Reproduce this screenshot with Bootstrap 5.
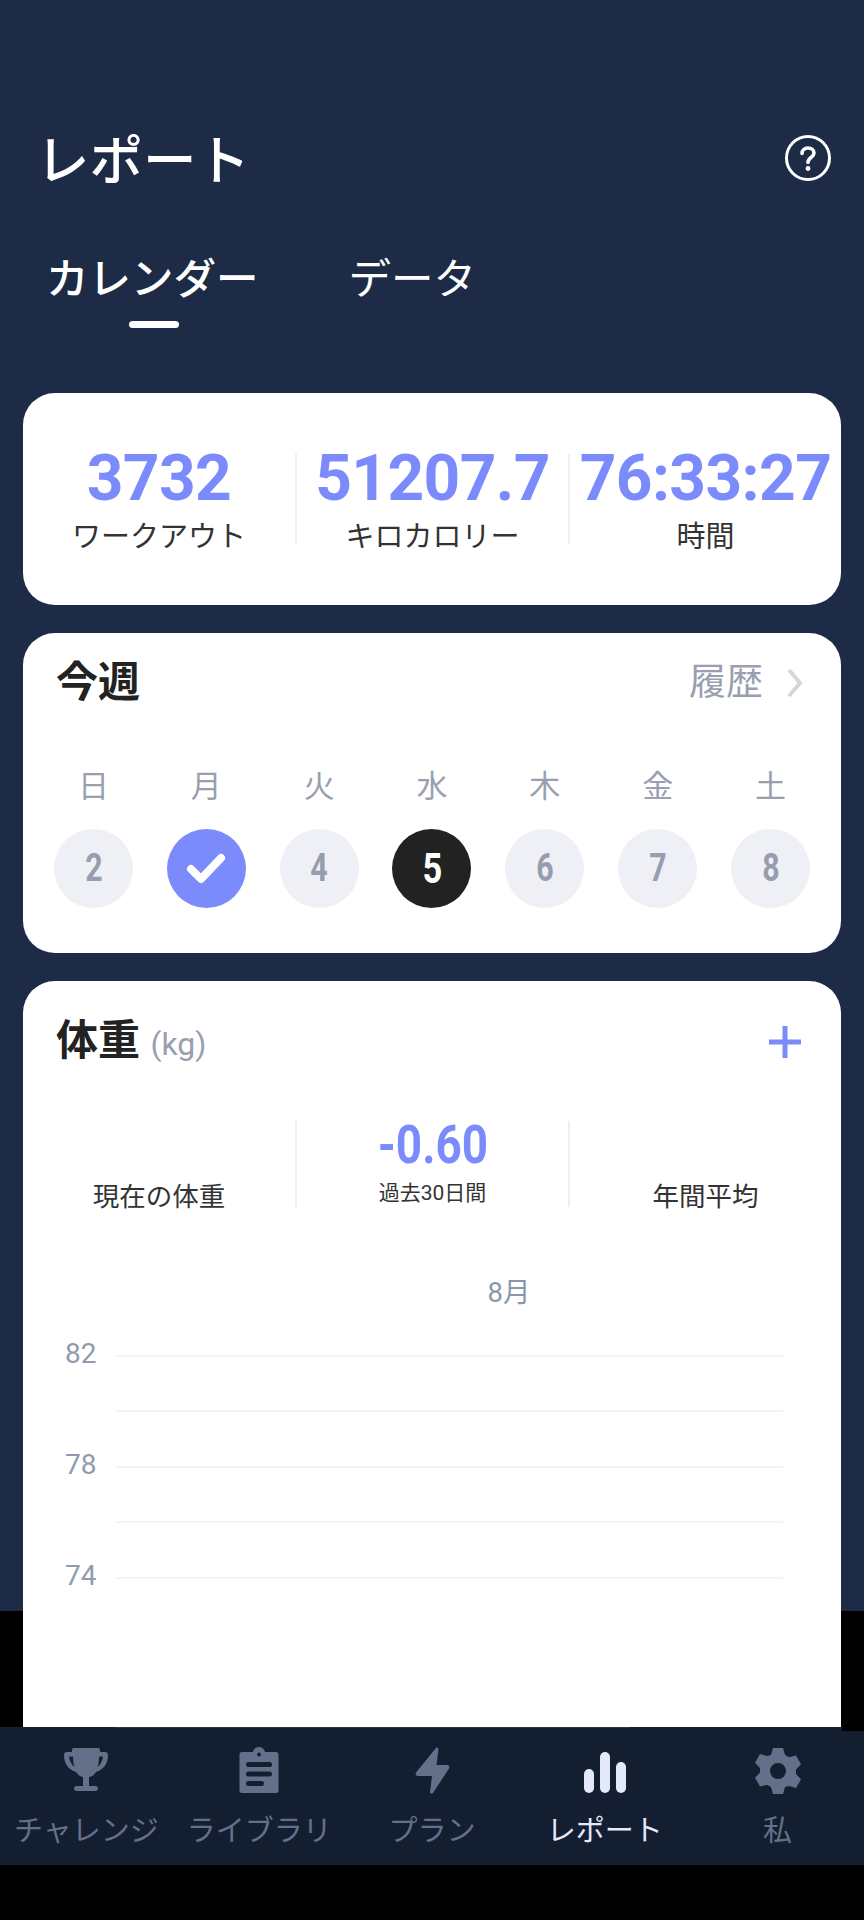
<!DOCTYPE html>
<html lang="ja">
<head>
    <meta charset="UTF-8">
    <meta name="viewport" content="width=device-width, initial-scale=1.0">
    <title>レポート</title>
    <link href="https://cdn.jsdelivr.net/npm/bootstrap@5.3.3/dist/css/bootstrap.min.css" rel="stylesheet">
    <style>
        html, body { background: #000; }
        body {
            width: 864px;
            height: 1920px;
            overflow: hidden;
            font-family: Roboto, "Noto Sans CJK JP", sans-serif;
            color: #222;
        }
        .report-screen {
            height: 1611px;
            background: #1d2b46;
            padding: 0 23px;
        }
        .report-head { height: 249px; padding: 128px 10px 0 13px; }
        .report-title { font-size: 53.500px; font-weight: 500; line-height: 68px; color: #fff; margin: 0; }
        .help-icon { width: 46px; height: 46px; margin-top: 7px; }
        .report-tabs { height: 144px; padding-left: 23px; gap: 90px; }
        .report-tab { font-size: 42.500px; line-height: 62px; color: #fff; position: relative; }
        .report-tab.is-active { font-weight: 500; }
        .report-tab.is-active::after {
            content: "";
            position: absolute;
            left: 83px;
            top: 72px;
            width: 50px;
            height: 7px;
            border-radius: 4px;
            background: #fff;
        }
        .panel { background: #fff; border-radius: 32px; margin-bottom: 28px; }
        .panel-total { height: 212px; padding-top: 51px; }
        .panel-week { height: 320px; padding: 20px 31px 0 33px; }
        .panel-weight { height: 746px; padding-top: 30px; margin-bottom: 0; border-radius: 32px 32px 0 0; }
        .stat-cell { width: 273px; text-align: center; flex: none; }
        .stat-cell:first-child { width: 272px; }
        .stat-cell + .stat-cell { border-left: 2px solid #eeeff2; }
        .stat-row-total .stat-cell { height: 90px; margin-top: 10px; }
        .stat-num { font-size: 64px; font-weight: 700; line-height: 62px; color: #7b8bfb; letter-spacing: -.6px; margin-top: -6px; white-space: nowrap; }
        .stat-label { font-size: 29px; line-height: 40px; color: #333; margin-top: 7px; }
        .panel-head-title { font-size: 42px; font-weight: 700; line-height: 60px; color: #222; }
        .history-wrap { gap: 23px; margin-right: 6px; }
        .history-link { font-size: 37px; line-height: 60px; color: #9a9fb0; }
        .day-row { margin-top: 52px; justify-content: space-between; }
        .day-col { width: 79px; margin-left: -2px; text-align: center; flex: none; }
        .day-name { font-size: 31px; line-height: 44px; color: #999fb0; }
        .day-dot {
            width: 79px;
            height: 79px;
            margin-top: 20px;
            border-radius: 50%;
            background: #eff0f5;
            color: #979daf;
            font-size: 38px;
            font-weight: 700;
        }
        .day-dot.is-done { background: #7b8bfb; }
        .day-dot.is-today { background: #222; color: #fff; font-size: 43px; }
        .narrow-digit { display: inline-block; transform: scaleX(.8); }
        .weight-head { padding: 0 40px 0 33px; }
        .weight-unit { font-size: 32px; font-weight: 400; color: #9a9fb0; }
        .plus-icon { width: 32px; height: 32px; margin-top: 15px; }
        .stat-row-weight { margin-top: 47px; }
        .stat-row-weight .stat-cell { height: 86px; }
        .stat-num-narrow {
            display: inline-block;
            transform: scaleX(.85);
            font-size: 54px;
            line-height: 48px;
            font-weight: 700;
            color: #7b8bfb;
        }
        .stat-sub { font-size: 21px; line-height: 30px; color: #333; margin-top: 8px; }
        .stat-label-low { font-size: 26.500px; line-height: 40px; color: #333; padding-top: 56px; }
        .month-label { font-size: 27.500px; line-height: 38px; color: #8a97a8; text-align: center; margin-top: 67px; padding-left: 154px; }
        .chart-area { margin-top: 16px; padding: 0 58px 0 42px; }
        .chart-row { height: 55.5px; }
        .chart-num { width: 51px; font-size: 28px; line-height: 28px; padding-bottom: 4px; height: 32px; color: #8f9bad; }
        .chart-line { flex: 1; height: 2px; background: #f3f4f6; }
        .tab-bar {
            position: relative;
            height: 138px;
            margin-top: 116px;
            background: #131e31;
        }
        /* seam where the chart sheet is cut off by the bar */
        .tab-bar::before { content: ""; position: absolute; left: 115px; top: 0; width: 515px; height: 1px; background: #2c3547; }
        .tab-bar::after { content: ""; position: absolute; right: 0; top: 0; width: 22px; height: 4px; background: #000; }
        .tab-item { width: 172.8px; text-align: center; flex: none; padding-top: 19px; color: #64708a; }
        .tab-item.is-active { color: #e4e8fb; }
        .tab-item svg { width: 50px; height: 50px; display: block; margin: 0 auto; }
        .tab-label { font-size: 29px; line-height: 40px; margin-top: 15px; white-space: nowrap; }
    </style>
</head>
<body>
<div class="report-screen">
    <div class="report-head d-flex justify-content-between align-items-start">
        <h1 class="report-title">レポート</h1>
        <svg class="help-icon" viewBox="0 0 46 46" fill="none">
            <circle cx="23" cy="23" r="21.500" stroke="#fff" stroke-width="3"/>
            <path d="M17 18.500c0-3.400 2.600-5.500 6-5.500s6 2.100 6 5c0 4.400-6 4.600-6 9.500" stroke="#fff" stroke-width="3.600" stroke-linecap="round"/>
            <circle cx="23" cy="33.500" r="2.400" fill="#fff"/>
        </svg>
    </div>
    <div class="report-tabs d-flex">
        <div class="report-tab is-active">カレンダー</div>
        <div class="report-tab">データ</div>
    </div>

    <!-- Totals -->
    <div class="panel panel-total">
        <div class="stat-row-total d-flex">
            <div class="stat-cell">
                <div class="stat-num">3732</div>
                <div class="stat-label">ワークアウト</div>
            </div>
            <div class="stat-cell">
                <div class="stat-num">51207.7</div>
                <div class="stat-label">キロカロリー</div>
            </div>
            <div class="stat-cell">
                <div class="stat-num">76:33:27</div>
                <div class="stat-label">時間</div>
            </div>
        </div>
    </div>

    <!-- This week -->
    <div class="panel panel-week">
        <div class="d-flex justify-content-between">
            <div class="panel-head-title">今週</div>
            <div class="history-wrap d-flex align-items-center">
                <span class="history-link">履歴</span>
                <svg width="18" height="30" viewBox="0 0 18 30" fill="none"><path d="M3 2l11 13L3 28" stroke="#d4d6dc" stroke-width="4"/></svg>
            </div>
        </div>
        <div class="day-row d-flex">
            <div class="day-col"><div class="day-name">日</div><div class="day-dot d-flex align-items-center justify-content-center"><span class="narrow-digit">2</span></div></div>
            <div class="day-col"><div class="day-name">月</div><div class="day-dot is-done d-flex align-items-center justify-content-center">
                <svg width="40" height="32" viewBox="0 0 40 32" fill="none"><path d="M5 16l10 10L35 5" stroke="#fff" stroke-width="8" stroke-linecap="round" stroke-linejoin="round"/></svg>
            </div></div>
            <div class="day-col"><div class="day-name">火</div><div class="day-dot d-flex align-items-center justify-content-center"><span class="narrow-digit">4</span></div></div>
            <div class="day-col"><div class="day-name">水</div><div class="day-dot is-today d-flex align-items-center justify-content-center"><span class="narrow-digit">5</span></div></div>
            <div class="day-col"><div class="day-name">木</div><div class="day-dot d-flex align-items-center justify-content-center"><span class="narrow-digit">6</span></div></div>
            <div class="day-col"><div class="day-name">金</div><div class="day-dot d-flex align-items-center justify-content-center"><span class="narrow-digit">7</span></div></div>
            <div class="day-col"><div class="day-name">土</div><div class="day-dot d-flex align-items-center justify-content-center"><span class="narrow-digit">8</span></div></div>
        </div>
    </div>

    <!-- Weight -->
    <div class="panel panel-weight">
        <div class="weight-head d-flex justify-content-between align-items-start">
            <div class="panel-head-title">体重 <span class="weight-unit">(kg)</span></div>
            <svg class="plus-icon" viewBox="0 0 32 32"><path d="M16 0v32M0 16h32" stroke="#7b8bfb" stroke-width="5"/></svg>
        </div>
        <div class="stat-row-weight d-flex">
            <div class="stat-cell"><div class="stat-label-low">現在の体重</div></div>
            <div class="stat-cell">
                <div class="stat-num-narrow">-0.60</div>
                <div class="stat-sub">過去30日間</div>
            </div>
            <div class="stat-cell"><div class="stat-label-low">年間平均</div></div>
        </div>
        <div class="month-label">8月</div>
        <div class="chart-area">
            <div class="chart-row d-flex align-items-center"><span class="chart-num">82</span><span class="chart-line"></span></div>
            <div class="chart-row d-flex align-items-center"><span class="chart-num"></span><span class="chart-line"></span></div>
            <div class="chart-row d-flex align-items-center"><span class="chart-num">78</span><span class="chart-line"></span></div>
            <div class="chart-row d-flex align-items-center"><span class="chart-num"></span><span class="chart-line"></span></div>
            <div class="chart-row d-flex align-items-center"><span class="chart-num">74</span><span class="chart-line"></span></div>
        </div>
    </div>
</div>

<!-- Bottom tabs -->
<nav class="tab-bar d-flex">
    <div class="tab-item">
        <svg viewBox="0 0 50 50" fill="currentColor"><path fill-rule="evenodd" d="M13 2h24a2 2 0 0 1 2 2v2h5c2 0 3 1 3 3 0 9-5 15-12 17-2 3-4 4.500-7 5v9h6c2 0 3 1 3 2.500S36 45 34 45H16c-2 0-3-1-3-2.500S14 40 16 40h6v-9c-3-.5-5-2-7-5C8 24 3 18 3 9c0-2 1-3 3-3h5V4a2 2 0 0 1 2-2zM8 10.500c.5 4.500 2.500 8 5.500 10.500-1-3-1.500-6.500-1.500-10.500H8zm34 0h-4c0 4-.5 7.500-1.500 10.500 3-2.500 5-6 5.500-10.500z"/></svg>
        <div class="tab-label">チャレンジ</div>
    </div>
    <div class="tab-item">
        <svg viewBox="0 0 50 50" fill="currentColor"><path fill-rule="evenodd" d="M8 6h11c.6-3 3-5 6-5s5.400 2 6 5h11a2.500 2.500 0 0 1 2.500 2.500v36A2.500 2.500 0 0 1 42 47H8a2.500 2.500 0 0 1-2.500-2.500v-36A2.500 2.500 0 0 1 8 6zm17 .5a2 2 0 1 0 0 4 2 2 0 0 0 0-4zM14.500 16a2 2 0 0 0 0 5h21a2 2 0 0 0 0-5h-21zm0 9.500a2 2 0 0 0 0 5h21a2 2 0 0 0 0-5h-21zm0 9.500a2 2 0 0 0 0 5h13a2 2 0 0 0 0-5h-13z"/></svg>
        <div class="tab-label">ライブラリ</div>
    </div>
    <div class="tab-item">
        <svg viewBox="0 0 50 50" fill="currentColor"><path d="M29 2c1-1 2.500 0 2.500 1.500L29.500 19H40c2 0 3 1.500 2 3.500L26 47c-1 1.500-3 .5-3-1l2-16H11c-2 0-3-2-2-3.500L29 2z"/></svg>
        <div class="tab-label">プラン</div>
    </div>
    <div class="tab-item is-active">
        <svg viewBox="0 0 50 50" fill="currentColor"><rect x="4" y="23" width="10" height="24" rx="5"/><rect x="20" y="6" width="10" height="41" rx="5"/><rect x="36" y="16" width="10" height="31" rx="5"/></svg>
        <div class="tab-label">レポート</div>
    </div>
    <div class="tab-item">
        <svg viewBox="0 0 50 50" fill="currentColor"><path fill-rule="evenodd" d="M20 2h10l2 7 4 2.300 7-1.800 5 8.700-5 5.200v4.600l5 5.200-5 8.700-7-1.800L32 41l-2 7H20l-2-7-4-2.300-7 1.800-5-8.700 5-5.200v-4.600l-5-5.200 5-8.700 7 1.800L18 9l2-7zm5 15a8 8 0 1 0 0 16 8 8 0 0 0 0-16z"/></svg>
        <div class="tab-label">私</div>
    </div>
</nav>
<script src="https://cdn.jsdelivr.net/npm/bootstrap@5.3.3/dist/js/bootstrap.bundle.min.js"></script>
</body>
</html>
